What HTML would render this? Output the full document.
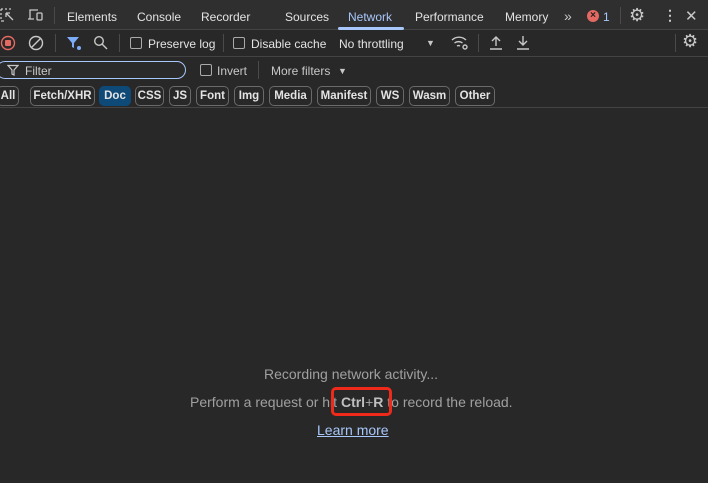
<!DOCTYPE html>
<html><head><meta charset="utf-8"><style>
*{margin:0;padding:0;box-sizing:border-box}
body{width:708px;height:483px;background:#282828;color:#e3e3e3;font-family:"Liberation Sans",sans-serif;font-size:12px;position:relative;overflow:hidden}
.a{position:absolute;white-space:nowrap}
.bar{position:absolute;left:0;width:708px}
.div{position:absolute;width:1px;background:#4a4a4a}
.cb{position:absolute;width:12px;height:12px;border:1px solid #aaa;border-radius:2px}
.chip{position:absolute;top:86px;height:20px;border:1px solid #6a6a6a;border-radius:5px;font-weight:bold;font-size:11.5px;line-height:18px;text-align:center;color:#e3e3e3}
svg{position:absolute}
</style></head><body>
<div class="bar" style="top:0;height:30px;background:#2f2f2f;border-bottom:1px solid #444"></div>
<div class="bar" style="top:56px;height:1px;background:#444"></div>
<div class="bar" style="top:107px;height:1px;background:#444"></div>
<svg style="left:0;top:8px" width="18" height="16" viewBox="0 0 18 16" fill="none" stroke="#c8c8c8" stroke-width="1.3"><path d="M1 1h2M5 1h2M9 1h2M1 1v2M1 5v2M1 9v2M1 13h3" /><path d="M6 5l7 7M6 5h4M6 5v4"/></svg>
<svg style="left:27px;top:8px" width="18" height="14" viewBox="0 0 18 14" fill="none" stroke="#c8c8c8" stroke-width="1.3"><path d="M3 11V2h8M1 11h6"/><rect x="10" y="5" width="5" height="7" rx="1"/></svg>
<div class="div" style="left:54px;top:7px;height:17px"></div>
<div class="a" style="left:67px;top:10px">Elements</div>
<div class="a" style="left:137px;top:10px">Console</div>
<div class="a" style="left:201px;top:10px">Recorder</div>
<div class="a" style="left:285px;top:10px">Sources</div>
<div class="a" style="left:348px;top:10px;color:#a8c7fa">Network</div>
<div class="a" style="left:338px;top:27px;width:66px;height:3px;background:#a8c7fa;border-radius:2px"></div>
<div class="a" style="left:415px;top:10px">Performance</div>
<div class="a" style="left:505px;top:10px">Memory</div>
<div class="a" style="left:564px;top:8px;font-size:14px;color:#c8c8c8">»</div>
<div class="a" style="left:587px;top:10px;width:12px;height:12px;border-radius:6px;background:#e46962;color:#222;font-size:10px;line-height:12px;text-align:center;font-weight:bold">×</div>
<div class="a" style="left:603px;top:10px;color:#a8c7fa">1</div>
<div class="div" style="left:620px;top:7px;height:17px"></div>
<div class="a" style="left:629px;top:5px;font-size:18px;color:#c8c8c8">⚙</div>
<div class="a" style="left:663px;top:7px;font-size:14px;color:#c8c8c8;font-weight:bold">⋮</div>
<div class="a" style="left:685px;top:7px;font-size:15px;color:#c8c8c8">✕</div>
<svg style="left:0;top:35px" width="16" height="16"><circle cx="8" cy="8" r="6.5" fill="none" stroke="#e46962" stroke-width="1.4"/><rect x="5" y="5" width="6" height="6" fill="#e46962" rx="1"/></svg>
<svg style="left:28px;top:35px" width="16" height="16" fill="none" stroke="#c8c8c8" stroke-width="1.4"><circle cx="8" cy="8" r="6.5"/><path d="M3.5 12.5l9-9"/></svg>
<div class="div" style="left:55px;top:34px;height:18px"></div>
<svg style="left:66px;top:35px" width="16" height="16"><path d="M1 2h12l-5 6v5l-2-1V8z" fill="#7cacf8"/><circle cx="13" cy="13" r="2" fill="#7cacf8"/></svg>
<svg style="left:93px;top:35px" width="16" height="16" fill="none" stroke="#c8c8c8" stroke-width="1.4"><circle cx="6" cy="6" r="4.3"/><path d="M9 9l5 5"/></svg>
<div class="div" style="left:119px;top:34px;height:18px"></div>
<div class="cb" style="left:130px;top:37px"></div>
<div class="a" style="left:148px;top:37px">Preserve log</div>
<div class="div" style="left:223px;top:34px;height:18px"></div>
<div class="cb" style="left:233px;top:37px"></div>
<div class="a" style="left:251px;top:37px">Disable cache</div>
<div class="a" style="left:339px;top:37px">No throttling</div>
<div class="a" style="left:426px;top:38px;font-size:9px;color:#c8c8c8">▼</div>
<svg style="left:451px;top:35px" width="18" height="16" fill="none" stroke="#c8c8c8" stroke-width="1.4"><path d="M1 5a10 10 0 0 1 14 0M3.5 8a6.5 6.5 0 0 1 8 0M6 11a3 3 0 0 1 3 0"/><circle cx="14" cy="12" r="2"/></svg>
<div class="div" style="left:478px;top:34px;height:18px"></div>
<svg style="left:488px;top:35px" width="16" height="16" fill="none" stroke="#c8c8c8" stroke-width="1.4"><path d="M8 11V2M4 6l4-4 4 4M2 14h12"/></svg>
<svg style="left:515px;top:35px" width="16" height="16" fill="none" stroke="#c8c8c8" stroke-width="1.4"><path d="M8 1v9M4 6l4 4 4-4M2 14h12"/></svg>
<div class="div" style="left:675px;top:34px;height:18px"></div>
<div class="a" style="left:682px;top:31px;font-size:18px;color:#c8c8c8">⚙</div>
<div class="a" style="left:-4px;top:61px;width:190px;height:18px;border:1.5px solid #a8c7fa;border-radius:9px;background:#2a2a2a"></div>
<svg style="left:7px;top:64px" width="12" height="12" fill="none" stroke="#c8c8c8" stroke-width="1.2"><path d="M1 1.5h10l-4 4.5v5l-2-1V6z"/></svg>
<div class="a" style="left:25px;top:64px;color:#c8c8c8">Filter</div>
<div class="cb" style="left:200px;top:64px"></div>
<div class="a" style="left:217px;top:64px;color:#c8c8c8">Invert</div>
<div class="div" style="left:258px;top:61px;height:18px"></div>
<div class="a" style="left:271px;top:64px;color:#c8c8c8">More filters</div>
<div class="a" style="left:338px;top:66px;font-size:9px;color:#c8c8c8">▼</div>
<div class="chip" style="left:-3px;width:22px">All</div>
<div class="chip" style="left:30px;width:65px">Fetch/XHR</div>
<div class="chip" style="left:99px;width:32px;background:#0e4a78;border-color:#0e4a78">Doc</div>
<div class="chip" style="left:135px;width:29px">CSS</div>
<div class="chip" style="left:169px;width:22px">JS</div>
<div class="chip" style="left:196px;width:33px">Font</div>
<div class="chip" style="left:234px;width:30px">Img</div>
<div class="chip" style="left:269px;width:43px">Media</div>
<div class="chip" style="left:317px;width:54px">Manifest</div>
<div class="chip" style="left:376px;width:28px">WS</div>
<div class="chip" style="left:409px;width:41px">Wasm</div>
<div class="chip" style="left:455px;width:40px">Other</div>
<div class="a" style="left:264px;top:366px;color:#a0a0a0;font-size:14px">Recording network activity...</div>
<div class="a" style="left:190px;top:394px;color:#a0a0a0;font-size:14px">Perform a request or hit <b style="color:#c0c0c0">Ctrl</b>+<b style="color:#c0c0c0">R</b> to record the reload.</div>
<div class="a" style="left:331px;top:387px;width:61px;height:29px;border:3px solid #f02a1a;border-radius:5px"></div>
<div class="a" style="left:317px;top:422px;color:#a8c7fa;font-size:14px;text-decoration:underline">Learn more</div>
</body></html>
